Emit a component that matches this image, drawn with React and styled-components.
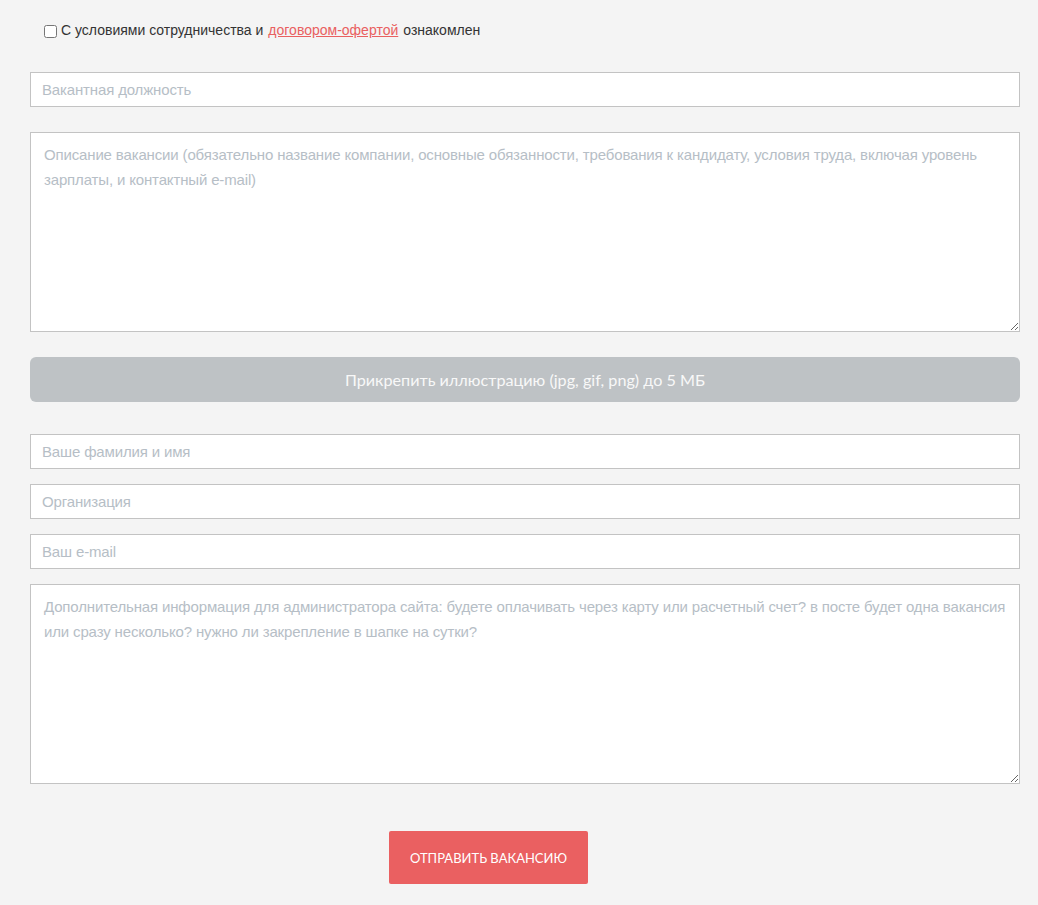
import styled, { createGlobalStyle } from 'styled-components';

const GlobalStyle = createGlobalStyle`
  html, body {
    margin: 0;
    padding: 0;
    background: #f4f4f4;
  }
  body {
    font-family: "Liberation Sans", Arial, sans-serif;
  }
`

const Form = styled.form`
  width: 990px;
  padding: 20px 0 22px 30px;
  display: flex;
  flex-direction: column;
`

const AgreeRow = styled.label`
  display: flex;
  align-items: center;
  margin-left: 14px;
  font-size: 14px;
  color: #333;
  height: 20px;
  margin-bottom: 32px;

  input {
    width: 13px;
    height: 13px;
    margin: 2px 4px 0 0;
  }

  a {
    color: #e96060;
    margin: 0 5px;
  }
`

const fieldBase = `
  box-sizing: border-box;
  width: 100%;
  background: #fff;
  border: 1px solid #c3c3c3;
  border-radius: 0;
  font-family: "Liberation Sans", Arial, sans-serif;
  font-size: 15px;
  letter-spacing: -0.15px;
  color: #333;
  outline: none;

  &::placeholder {
    color: #b6bec6;
  }
`

const Input = styled.input`
  ${fieldBase}
  height: 35px;
  padding: 0 11px;
  margin-bottom: ${(p) => p.$gap || 15}px;
`

const TextArea = styled.textarea`
  ${fieldBase}
  display: block;
  height: 200px;
  padding: 9px 6px 9px 13px;
  line-height: 25px;
  resize: both;
  margin-bottom: ${(p) => p.$gap || 0}px;
`

const AttachButton = styled.button`
  height: 45px;
  width: 100%;
  border: 0;
  border-radius: 6px;
  background: #bec2c5;
  color: #f8f8f8;
  font-family: Lato, "Open Sans", sans-serif;
  font-size: 16.2px;
  cursor: pointer;
  margin-bottom: 32px;
`

const SubmitButton = styled.button`
  align-self: flex-start;
  margin-left: 359px;
  width: 199px;
  height: 53px;
  border: 0;
  border-radius: 2px;
  background: #ea6061;
  color: #fff;
  font-family: Lato, "Open Sans", sans-serif;
  font-size: 13px;
  text-transform: uppercase;
  cursor: pointer;
`

export default function App() {
  return (
    <>
      <GlobalStyle />
      <Form onSubmit={(e) => e.preventDefault()}>
        <AgreeRow>
          <input type="checkbox" />
          С условиями сотрудничества и<a href="#">договором-офертой</a>ознакомлен
        </AgreeRow>
        <Input placeholder="Вакантная должность" $gap={25} />
        <TextArea
          placeholder="Описание вакансии (обязательно название компании, основные обязанности, требования к кандидату, условия труда, включая уровень зарплаты, и контактный e-mail)"
          $gap={25}
        />
        <AttachButton type="button">Прикрепить иллюстрацию (jpg, gif, png) до 5 МБ</AttachButton>
        <Input placeholder="Ваше фамилия и имя" />
        <Input placeholder="Организация" />
        <Input placeholder="Ваш e-mail" />
        <TextArea
          placeholder="Дополнительная информация для администратора сайта: будете оплачивать через карту или расчетный счет? в посте будет одна вакансия или сразу несколько? нужно ли закрепление в шапке на сутки?"
          $gap={47}
        />
        <SubmitButton type="submit">Отправить вакансию</SubmitButton>
      </Form>
    </>
  );
}
